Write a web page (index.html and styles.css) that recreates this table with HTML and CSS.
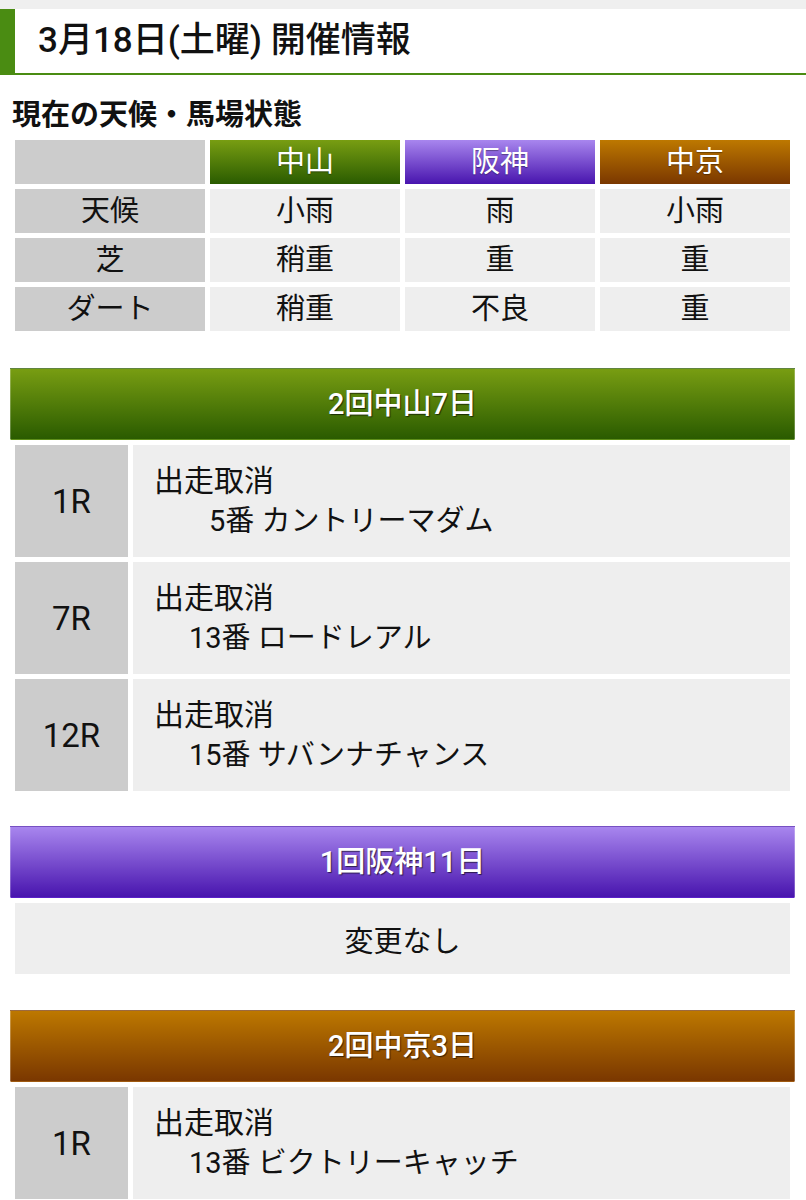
FILE: index.html
```html
<!DOCTYPE html>
<html lang="ja">
<head>
<meta charset="utf-8">
<title>開催情報</title>
<link rel="stylesheet" href="styles.css">
</head>
<body>
<div class="page">
  <h1 class="title">3月18日(土曜) 開催情報</h1>
  <h2 class="label">現在の天候・馬場状態</h2>
  <table class="weather">
    <tr>
      <th class="corner"></th>
      <th class="course nakayama">中山</th>
      <th class="course hanshin">阪神</th>
      <th class="course chukyo">中京</th>
    </tr>
    <tr>
      <th class="rowhead">天候</th>
      <td>小雨</td>
      <td>雨</td>
      <td>小雨</td>
    </tr>
    <tr>
      <th class="rowhead">芝</th>
      <td>稍重</td>
      <td>重</td>
      <td>重</td>
    </tr>
    <tr>
      <th class="rowhead">ダート</th>
      <td>稍重</td>
      <td>不良</td>
      <td>重</td>
    </tr>
  </table>

  <section class="meet">
    <div class="meet-head nakayama">2回中山7日</div>
    <table class="races">
      <tr>
        <th class="race-no">1R</th>
        <td class="race-info"><div>出走取消</div><div class="horse single">5番 カントリーマダム</div></td>
      </tr>
      <tr>
        <th class="race-no">7R</th>
        <td class="race-info"><div>出走取消</div><div class="horse">13番 ロードレアル</div></td>
      </tr>
      <tr>
        <th class="race-no">12R</th>
        <td class="race-info"><div>出走取消</div><div class="horse">15番 サバンナチャンス</div></td>
      </tr>
    </table>
  </section>

  <section class="meet">
    <div class="meet-head hanshin">1回阪神11日</div>
    <table class="races">
      <tr>
        <td class="nochange">変更なし</td>
      </tr>
    </table>
  </section>

  <section class="meet">
    <div class="meet-head chukyo">2回中京3日</div>
    <table class="races">
      <tr>
        <th class="race-no">1R</th>
        <td class="race-info"><div>出走取消</div><div class="horse">13番 ビクトリーキャッチ</div></td>
      </tr>
    </table>
  </section>
</div>
</body>
</html>
```

FILE: styles.css
```css
html, body {
  margin: 0;
  padding: 0;
  background: #ffffff;
}

body {
  font-family: Roboto, "Noto Sans CJK JP", sans-serif;
  color: #111111;
}

.page {
  border-top: 9px solid #efefef;
  padding-bottom: 40px;
}

.title {
  margin: 0;
  height: 64px;
  line-height: 64px;
  padding-left: 23px;
  border-left: 15px solid #4a8c12;
  border-bottom: 2px solid #4a8c12;
  font-size: 35px;
  font-weight: 500;
  color: #111111;
}

.label {
  margin: 0;
  padding: 20px 0 0 12px;
  font-size: 29px;
  line-height: 40px;
  font-weight: 700;
  color: #111111;
}

.weather {
  margin-left: 10px;
  width: 785px;
  border-spacing: 5px;
  table-layout: fixed;
}

.weather th,
.weather td {
  height: 44px;
  padding: 0;
  font-size: 29px;
  font-weight: 400;
  text-align: center;
  vertical-align: middle;
  line-height: 44px;
}

.weather td {
  background: #eeeeee;
}

.weather .corner,
.weather .rowhead {
  background: #cccccc;
}

.course {
  color: #ffffff;
  text-shadow: 0 1px 1px rgba(0, 0, 0, 0.35);
}

.nakayama {
  background: linear-gradient(#789d12, #2a5b00);
}

.hanshin {
  background: linear-gradient(#a886ee, #4814ae);
}

.chukyo {
  background: linear-gradient(#bd7800, #7a3700);
}

.meet {
  margin-top: 32px;
}

.meet + .meet {
  margin-top: 30px;
}

.meet:last-child {
  margin-top: 31px;
}

.meet-head {
  margin: 0 11px 0 10px;
  height: 70px;
  line-height: 70px;
  border: 1px solid rgba(255, 255, 255, 0.25);
  text-align: center;
  color: #ffffff;
  font-size: 29px;
  font-weight: 500;
  text-shadow: 1px 1px 1px rgba(0, 0, 0, 0.6);
}

.meet-head.nakayama {
  border-bottom-color: #5e8f1a;
}

.meet-head.hanshin {
  border-bottom-color: #5a20c8;
}

.meet-head.chukyo {
  border-bottom-color: #a05a10;
}

.races {
  margin-left: 10px;
  width: 785px;
  border-spacing: 5px;
  table-layout: fixed;
}

.race-no {
  width: 113px;
  height: 112px;
  padding: 0;
  background: #cccccc;
  font-size: 33px;
  font-weight: 400;
  text-align: center;
  vertical-align: middle;
}

.race-info {
  padding: 0 0 0 21px;
  background: #eeeeee;
  font-size: 30px;
  line-height: 40px;
  text-align: left;
  vertical-align: middle;
}

.horse {
  padding-left: 35px;
  font-size: 29px;
}

.horse.single {
  padding-left: 55px;
}

.nochange {
  height: 71px;
  padding: 0;
  background: #eeeeee;
  font-size: 29px;
  text-align: center;
  vertical-align: middle;
}
```
